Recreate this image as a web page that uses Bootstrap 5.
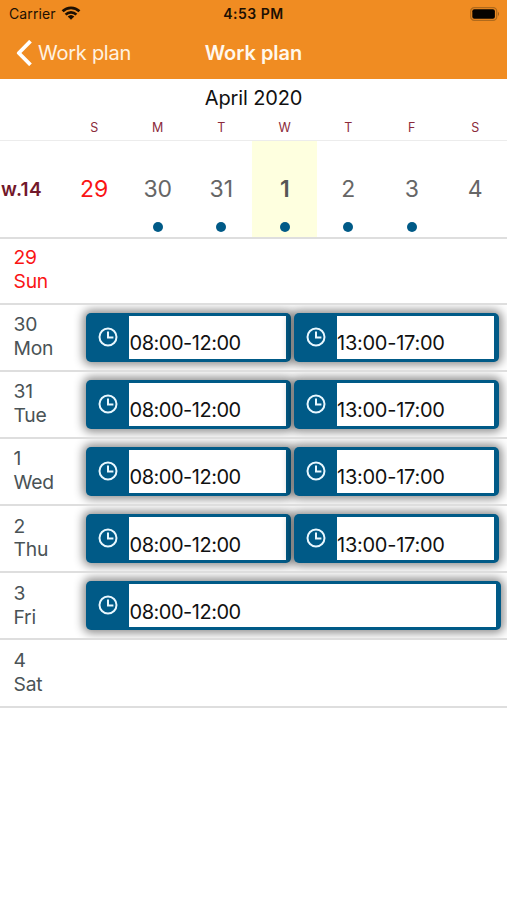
<!DOCTYPE html>
<html lang="en">
<head>
<meta charset="utf-8">
<meta name="viewport" content="width=device-width, initial-scale=1">
<title>Work plan</title>
<link href="https://cdn.jsdelivr.net/npm/bootstrap@5.3.0/dist/css/bootstrap.min.css" rel="stylesheet">
<style>
body{font-family:Inter,"Liberation Sans",sans-serif;background:#fff;color:#111;overflow:hidden}
svg{display:block;flex:none}
.top{background:#f08c22;height:79px}
.status{height:27px;padding:0 7px 0 9px;font-size:14px;line-height:27px;color:#1c1003}
.status>div,.titles>div{flex:1 1 0}
.carrier{letter-spacing:.1px}
.carrier svg{margin:-2px 0 0 5px}
.status .clock{font-weight:600;font-size:14px;letter-spacing:.5px;margin-left:-2px}
.titles{height:52px;padding:0 16px;font-size:20px;line-height:50px;color:#fff3e2;white-space:nowrap}
.titles .back{letter-spacing:-.25px;margin-left:6px}
.titles .heading{font-weight:600;font-size:20px;color:#fff8ee;padding-top:1px}
.month{height:38px;font-size:20px;line-height:38px;letter-spacing:-.15px}
.week{display:grid;grid-template-columns:62px repeat(7,63.5px)}
.letters{height:24px;line-height:22px;font-size:12.5px;color:#8b2a3b;border-bottom:1px solid #ececec}
.letters>div,.days>div{padding-left:1px}
.days{height:97.5px;border-bottom:2px solid #dedede;font-size:23px;color:#666}
.days>div{padding-top:31px;line-height:34px}
.days .wk{font-size:19px;font-weight:600;color:#72182a;letter-spacing:.35px;padding-top:32px}
.days .today{background:#feffdf;font-weight:600;color:#555;margin:0 -1px}
.dot{width:10px;height:10px;border-radius:50%;background:#005a87;margin:16px auto 0}
.red,.days .red{color:#fa1414}
.plan{height:67.2px;border-bottom:2px solid #dedede;overflow:hidden;color:#4a5356}
.plan.red{color:#fa1414;height:66px}
.label{width:86px;padding:8.6px 0 0 13.5px;font-size:19.3px;line-height:23.7px;letter-spacing:-.2px}
.plan.red .label{padding-top:7.6px}
.slots{flex:1;padding-top:8px;gap:3px;padding-right:8px}
.wide .slots{padding-right:6px}
.slot{flex:1 1 0;height:49px;background:#005a87;border-radius:5px;padding:3px 5px 3px 0;box-shadow:0 0 10px 3px rgba(0,0,0,.45);color:#111}
.ico{width:43px;padding:11px 0 0 12px}
.time{flex:1;background:#fff;font-size:20px;line-height:24px;padding-top:15.5px;white-space:nowrap;letter-spacing:-.25px}
.time.am{letter-spacing:-.48px;padding-left:.5px}
</style>
</head>
<body>
<header class="top">
  <div class="status d-flex align-items-center">
    <div class="carrier d-flex align-items-center"><span>Carrier</span>
      <svg width="20" height="14" viewBox="0 0 20 14" fill="none" stroke="#1c1003" stroke-width="2.7"><path d="M1.6 5.3a12 12 0 0 1 16.8 0M4.6 8.6a7.8 7.8 0 0 1 10.8 0"/><path d="M10 13.7 6.7 10.5a4.8 4.8 0 0 1 6.6 0z" fill="#1c1003" stroke="none"/></svg>
    </div>
    <div class="clock text-center">4:53 PM</div>
    <div class="d-flex justify-content-end">
      <svg width="30" height="14" viewBox="0 0 30 14"><rect x=".7" y=".7" width="26" height="12.6" rx="3.6" fill="none" stroke="#b06a1c" stroke-width="1.3"/><rect x="2.3" y="2.3" width="22.6" height="9.4" rx="2" fill="#050300"/><path d="M28 4.8q2 2.2 0 4.4z" fill="#9d5c18"/></svg>
    </div>
  </div>
  <div class="titles d-flex">
    <div class="d-flex align-items-center"><svg width="16" height="26" viewBox="0 0 16 26" fill="none" stroke="#fff" stroke-width="3.8" stroke-linejoin="round"><path d="M14.5 1.2 2.8 13l11.7 11.8"/></svg><span class="back">Work plan</span></div>
    <div class="heading text-center">Work plan</div>
    <div></div>
  </div>
</header>
<div class="month text-center">April 2020</div>
<div class="week letters text-center"><div></div><div>S</div><div>M</div><div>T</div><div>W</div><div>T</div><div>F</div><div>S</div></div>
<div class="week days text-center">
  <div class="wk text-start">w.14</div>
  <div class="red">29</div>
  <div>30<div class="dot"></div></div>
  <div>31<div class="dot"></div></div>
  <div class="today">1<div class="dot"></div></div>
  <div>2<div class="dot"></div></div>
  <div>3<div class="dot"></div></div>
  <div>4</div>
</div>
<main id="plans"></main>
<script>
const clock = '<div class="ico"><svg width="20" height="20" viewBox="0 0 20 20" fill="none" stroke="#e9f8ff" stroke-width="2"><circle cx="10" cy="10" r="8.5"/><path d="M10 4.5v6h5.4" stroke-width="2"/></svg></div>';
const am = '08:00-12:00', pm = '13:00-17:00';
const plans = [[29,'Sun',[]],[30,'Mon',[am,pm]],[31,'Tue',[am,pm]],[1,'Wed',[am,pm]],[2,'Thu',[am,pm]],[3,'Fri',[am]],[4,'Sat',[]]];
document.getElementById('plans').innerHTML = plans.map(([n,d,s]) =>
  `<div class="plan d-flex ${d==='Sun'?'red':''} ${s.length===1?'wide':''}"><div class="label">${n}<br>${d}</div><div class="slots d-flex">${s.map(t=>`<div class="slot d-flex">${clock}<div class="time ${t===am?'am':''}">${t}</div></div>`).join('')}</div></div>`).join('');
</script>
<script src="https://cdn.jsdelivr.net/npm/bootstrap@5.3.0/dist/js/bootstrap.bundle.min.js"></script>
</body>
</html>
